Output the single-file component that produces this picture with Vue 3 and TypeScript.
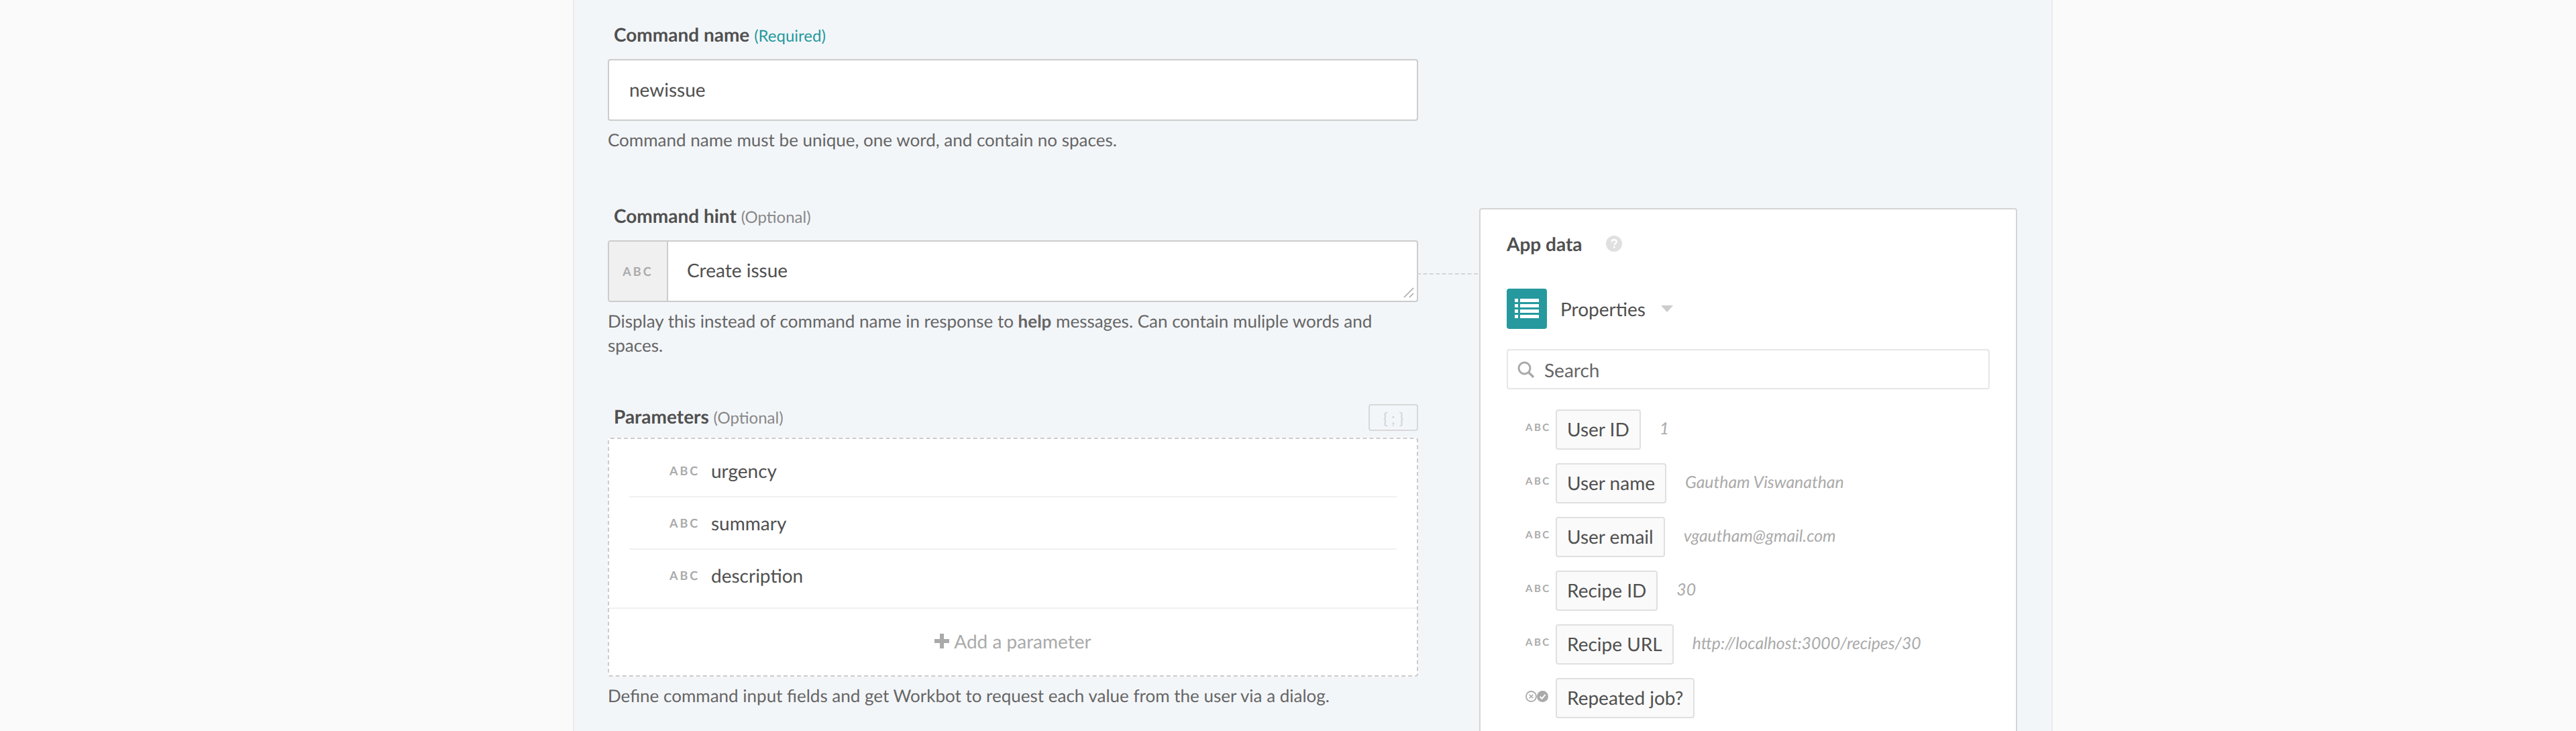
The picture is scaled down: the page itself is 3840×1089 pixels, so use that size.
<script setup lang="ts">
interface Param { name: string }
interface DataRow { label: string; value?: string; type: 'text' | 'bool' }

const params: Param[] = [{ name: 'urgency' }, { name: 'summary' }, { name: 'description' }]

const rows: DataRow[] = [
  { label: 'User ID', value: '1', type: 'text' },
  { label: 'User name', value: 'Gautham Viswanathan', type: 'text' },
  { label: 'User email', value: 'vgautham@gmail.com', type: 'text' },
  { label: 'Recipe ID', value: '30', type: 'text' },
  { label: 'Recipe URL', value: 'http://localhost:3000/recipes/30', type: 'text' },
  { label: 'Repeated job?', type: 'bool' },
]
</script>

<template>
  <div class="page">
    <div class="panel">
      <div class="form">
        <section class="field first">
          <div class="label">Command name <span class="req">(Required)</span></div>
          <input class="input" value="newissue" />
          <p class="help">Command name must be unique, one word, and contain no spaces.</p>
        </section>

        <section class="field hint">
          <div class="label">Command hint <span class="opt">(Optional)</span></div>
          <div class="hint-box">
            <span class="prefix"><span class="abc">ABC</span></span>
            <textarea class="hint-text" rows="1">Create issue</textarea>
            <svg class="grip" width="16" height="16" viewBox="0 0 16 16">
              <path d="M1 15 15 1M9 15 15 9" stroke="#aaa" stroke-width="1.6" fill="none" />
            </svg>
            <div class="connector"></div>
          </div>
          <p class="help">
            Display this instead of command name in response to <b>help</b> messages. Can contain muliple words and spaces.
          </p>
        </section>

        <section class="field params">
          <div class="label-row">
            <div class="label">Parameters <span class="opt">(Optional)</span></div>
            <button class="code-btn">{;}</button>
          </div>
          <div class="param-box">
            <ul class="param-list">
              <li v-for="p in params" :key="p.name" class="param">
                <span class="abc">ABC</span>
                <span class="param-name">{{ p.name }}</span>
              </li>
            </ul>
            <div class="add"><span class="plus"></span>Add a parameter</div>
          </div>
          <p class="help">Define command input fields and get Workbot to request each value from the user via a dialog.</p>
        </section>
      </div>

      <aside class="card">
        <div class="card-title">
          <span>App data</span>
          <svg class="q" width="24" height="24" viewBox="0 0 24 24">
            <circle cx="12" cy="12" r="12" fill="#e0e0e0" />
            <path d="M8.400 9.400c.2-2 1.700-3.200 3.700-3.200 2.100 0 3.600 1.200 3.600 3 0 1.500-.9 2.200-1.900 2.900-.9.600-1.300 1-1.300 2.100" stroke="#fff" stroke-width="2.400" fill="none" />
            <rect x="10.900" y="16" width="2.600" height="2.600" fill="#fff" />
          </svg>
        </div>

        <div class="source">
          <div class="source-icon">
            <svg width="36" height="30" viewBox="0 0 36 30" fill="#fff">
              <rect x="0" y="0" width="5" height="5" /><rect x="8" y="0" width="28" height="5" />
              <rect x="0" y="8" width="5" height="5" /><rect x="8" y="8" width="28" height="5" />
              <rect x="0" y="16" width="5" height="5" /><rect x="8" y="16" width="28" height="5" />
              <rect x="0" y="24" width="5" height="5" /><rect x="8" y="24" width="28" height="5" />
            </svg>
          </div>
          <span class="source-name">Properties</span>
          <span class="caret"></span>
        </div>

        <div class="search">
          <svg width="26" height="26" viewBox="0 0 26 26" fill="none" stroke="#aaa" stroke-width="3">
            <circle cx="10.500" cy="10.500" r="8.500" />
            <path d="M17 17l7 7" stroke-width="3.600" />
          </svg>
          <span>Search</span>
        </div>

        <div class="rows">
          <div v-for="r in rows" :key="r.label" class="row">
            <span class="type">
              <span v-if="r.type === 'text'" class="abc">ABC</span>
              <svg v-else width="34" height="17" viewBox="0 0 34 17">
                <circle cx="8.500" cy="8.500" r="7.500" fill="#fff" stroke="#aaa" stroke-width="1.800" />
                <path d="M5.700 5.700l5.600 5.600M11.300 5.700l-5.600 5.600" stroke="#aaa" stroke-width="1.600" />
                <circle cx="25.500" cy="8.500" r="8.500" fill="#aaa" />
                <path d="M21.500 8.800l3 3 5-6" stroke="#fff" stroke-width="2" fill="none" />
              </svg>
            </span>
            <span class="pill">{{ r.label }}</span>
            <span v-if="r.value" class="value">{{ r.value }}</span>
          </div>
        </div>
      </aside>
    </div>
  </div>
</template>

<style>
html, body { margin: 0; background: #fafafa; }
</style>

<style scoped>
.page {
  height: 1089px;
  overflow: hidden;
  background: #fafafa;
  font-family: Lato, "Liberation Sans", sans-serif;
  color: #505050;
  text-rendering: geometricPrecision;
}
.panel {
  box-sizing: border-box;
  width: 2206px;
  height: 1089px;
  margin-left: 854px;
  padding-left: 50px;
  display: flex;
  gap: 91px;
  background: #f3f6f9;
  border-left: 2px solid #ebebeb;
  border-right: 2px solid #ebebeb;
}
.form { width: 1208px; flex: none; }
.label { height: 36px; padding-left: 9px; font-size: 28px; line-height: 32px; font-weight: 700; }
.req, .opt { font-size: 24px; font-weight: 400; }
.req { color: #26999e; }
.opt { color: #888; }
.field.first { padding-top: 35px; }
.field.first .input { margin-top: 17px; }
.input, .hint-text {
  font: inherit;
  font-size: 28px;
  color: #505050;
  outline: none;
  text-rendering: geometricPrecision;
}
.input {
  display: block;
  box-sizing: border-box;
  width: 100%;
  height: 92px;
  padding: 0 30px 2px;
  background: #fff;
  border: 2px solid #ccc;
  border-radius: 4px;
}
.help {
  margin: 10px 0 0;
  font-size: 26px;
  line-height: 36px;
  color: #666;
}
.hint { margin-top: 79px; }
.hint-box {
  position: relative;
  display: flex;
  box-sizing: border-box;
  height: 92px;
  margin-top: 17px;
  background: #fff;
  border: 2px solid #ccc;
  border-radius: 4px;
}
.prefix {
  flex: none;
  box-sizing: border-box;
  width: 88px;
  display: flex;
  align-items: center;
  justify-content: center;
  background: #f0f0f0;
  border-right: 2px solid #ccc;
}
.abc { font-size: 18px; font-weight: 700; letter-spacing: 3px; color: #aaa; line-height: 1; }
.hint-text {
  flex: 1;
  border: 0;
  padding: 24px 28px 0;
  line-height: 36px;
  resize: none;
  background: transparent;
}
.grip { position: absolute; right: 4px; bottom: 4px; }
.connector {
  position: absolute;
  left: 100%;
  top: 47px;
  width: 91px;
  border-top: 2px dashed #d5d5d5;
}
.params { margin-top: 70px; }
.label-row { display: flex; justify-content: space-between; align-items: center; height: 40px; }
.code-btn {
  box-sizing: border-box;
  width: 74px;
  height: 40px;
  padding: 0 0 0 5px;
  background: transparent;
  border: 2px solid #d8d8d8;
  border-radius: 4px;
  font-family: Lato, sans-serif;
  font-size: 24px;
  letter-spacing: 5px;
  color: #d4d4d4;
}
.param-box {
  box-sizing: border-box;
  height: 356px;
  margin-top: 10px;
  background: #fff;
  border: 2px dashed #ccc;
  border-radius: 4px;
}
.param-list { list-style: none; margin: 0; padding: 9px 30px 0; }
.param {
  box-sizing: border-box;
  display: flex;
  align-items: center;
  height: 78px;
  padding: 0 0 1px 60px;
  border-bottom: 2px solid #f0f0f0;
}
.param:last-child { border-bottom: 0; height: 86px; padding: 0 0 10px 60px; }
.param .abc { width: 62px; margin-top: 0; }
.param-name { font-size: 28px; }
.add {
  box-sizing: border-box;
  display: flex;
  align-items: center;
  justify-content: center;
  height: 101px;
  padding-bottom: 3px;
  border-top: 2px solid #f0f0f0;
  font-size: 28px;
  color: #aaa;
}
.plus {
  width: 22px;
  height: 22px;
  margin-right: 7px;
  background:
    linear-gradient(#aaa, #aaa) center / 100% 6px no-repeat,
    linear-gradient(#aaa, #aaa) center / 6px 100% no-repeat;
}
.card {
  box-sizing: border-box;
  flex: none;
  width: 802px;
  height: 900px;
  margin-top: 310px;
  padding: 0 39px;
  background: #fff;
  border: 2px solid #d5d5d5;
  border-bottom: 0;
  border-radius: 4px 4px 0 0;
}
.card-title {
  display: flex;
  align-items: center;
  gap: 35px;
  height: 36px;
  margin-top: 33px;
  font-size: 28px;
  font-weight: 700;
}
.source { display: flex; align-items: center; margin-top: 49px; }
.source-icon {
  width: 60px;
  height: 60px;
  display: flex;
  align-items: center;
  justify-content: center;
  background: #26999e;
  border-radius: 4px;
}
.source-name { margin-left: 20px; font-size: 28px; }
.caret {
  margin-left: 23px;
  border-left: 9px solid transparent;
  border-right: 9px solid transparent;
  border-top: 10px solid #ccc;
}
.search {
  box-sizing: border-box;
  display: flex;
  align-items: center;
  gap: 14px;
  width: 720px;
  height: 60px;
  margin-top: 30px;
  padding: 2px 14px 0;
  border: 2px solid #e6e6e6;
  border-radius: 4px;
  font-size: 28px;
  color: #666;
}
.rows { margin-top: 30px; display: flex; flex-direction: column; gap: 20px; }
.row { display: flex; align-items: center; height: 60px; }
.type { flex: none; width: 73px; padding-left: 28px; box-sizing: border-box; margin-bottom: 6px; display: flex; }
.type .abc { font-size: 15px; letter-spacing: 2.500px; }
.pill {
  box-sizing: border-box;
  height: 60px;
  padding: 0 15px 2px;
  display: flex;
  align-items: center;
  background: #fafafa;
  border: 2px solid #e0e0e0;
  border-radius: 4px;
  font-size: 28px;
}
.value { margin: 0 0 4px 28px; font-size: 24.800px; font-style: italic; color: #aaa; }
</style>
